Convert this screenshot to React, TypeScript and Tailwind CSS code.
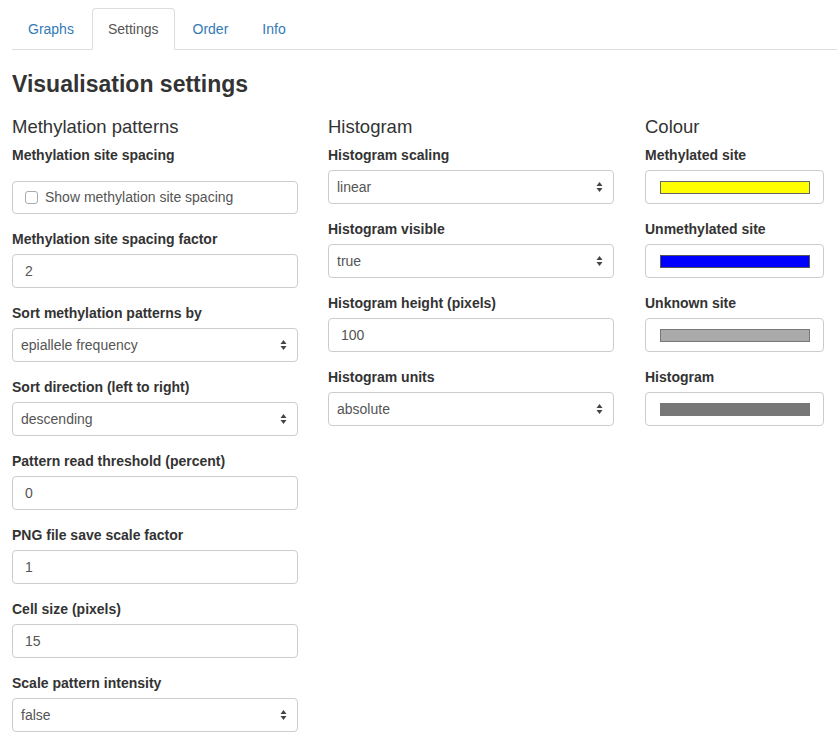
import React from "react";

const tabs = ["Graphs", "Settings", "Order", "Info"];

const Arrows = () => (
  <svg width="7" height="11" viewBox="0 0 7 11" className="absolute right-[10px] top-1/2 -translate-y-1/2">
    <path d="M3.5 0.5 L6.5 4.5 L0.5 4.5 Z" fill="#444" />
    <path d="M3.5 10.5 L6.5 6.5 L0.5 6.5 Z" fill="#444" />
  </svg>
);

const Label = ({ children }: { children: React.ReactNode }) => (
  <div className="text-[14px] leading-[20px] font-bold text-[#333] mb-[5px]">{children}</div>
);

const TextField = ({ label, value }: { label: string; value: string }) => (
  <div className="mb-[15px]">
    <Label>{label}</Label>
    <div className="h-[34px] border border-[#ccc] rounded-[4px] px-[12px] flex items-center text-[14px] text-[#555] bg-white">
      {value}
    </div>
  </div>
);

const SelectField = ({ label, value }: { label: string; value: string }) => (
  <div className="mb-[15px]">
    <Label>{label}</Label>
    <div className="relative h-[34px] border border-[#ccc] rounded-[4px] px-[8px] flex items-center text-[14px] text-[#555] bg-white">
      {value}
      <Arrows />
    </div>
  </div>
);

const ColourField = ({ label, fill, border }: { label: string; fill: string; border: string }) => (
  <div className="mb-[15px]">
    <Label>{label}</Label>
    <div className="h-[34px] border border-[#ccc] rounded-[4px] pl-[14px] flex items-center bg-white">
      <div className="w-[150px] h-[13px] border" style={{ background: fill, borderColor: border }} />
    </div>
  </div>
);

const Heading = ({ children }: { children: React.ReactNode }) => (
  <h4 className="text-[18.5px] leading-[20px] text-[#333] mt-[10px] mb-[8px]">{children}</h4>
);

export default function App() {
  return (
    <div className="min-h-screen bg-white pl-[12px] pt-[8px]" style={{ fontFamily: '"Liberation Sans", Arial, sans-serif' }}>
      <ul className="flex border-b border-[#ddd] h-[42px]">
        {tabs.map((t) => (
          <li key={t} className="mr-[2px] -mb-px">
            {t === "Settings" ? (
              <div className="h-[42px] px-[15px] flex items-center text-[14px] text-[#555] bg-white border border-[#ddd] border-b-transparent rounded-t-[4px]">
                {t}
              </div>
            ) : (
              <div className="h-[42px] px-[16px] flex items-center text-[14px] text-[#337ab7]">{t}</div>
            )}
          </li>
        ))}
      </ul>
      <h3 className="text-[23px] leading-[26px] font-bold text-[#333] mt-[21px] mb-[10px]">Visualisation settings</h3>
      <div className="grid grid-cols-[286px_286px_180px] gap-x-[30px]">
        <div>
          <Heading>Methylation patterns</Heading>
          <div className="mb-[15px]">
            <Label>Methylation site spacing</Label>
            <div className="mt-[16px] h-[33px] border border-[#ccc] rounded-[4px] pl-[12px] flex items-center gap-[7px] text-[14px] text-[#555]">
              <span className="w-[13px] h-[13px] border border-[#aaa] rounded-[3px] bg-white" />
              Show methylation site spacing
            </div>
          </div>
          <TextField label="Methylation site spacing factor" value="2" />
          <SelectField label="Sort methylation patterns by" value="epiallele frequency" />
          <SelectField label="Sort direction (left to right)" value="descending" />
          <TextField label="Pattern read threshold (percent)" value="0" />
          <TextField label="PNG file save scale factor" value="1" />
          <TextField label="Cell size (pixels)" value="15" />
          <SelectField label="Scale pattern intensity" value="false" />
        </div>
        <div>
          <Heading>Histogram</Heading>
          <SelectField label="Histogram scaling" value="linear" />
          <SelectField label="Histogram visible" value="true" />
          <TextField label="Histogram height (pixels)" value="100" />
          <SelectField label="Histogram units" value="absolute" />
        </div>
        <div className="ml-px">
          <Heading>Colour</Heading>
          <ColourField label="Methylated site" fill="#ffff00" border="#666" />
          <ColourField label="Unmethylated site" fill="#0000ff" border="#555" />
          <ColourField label="Unknown site" fill="#aaaaaa" border="#777" />
          <ColourField label="Histogram" fill="#777777" border="#777777" />
        </div>
      </div>
    </div>
  );
}
